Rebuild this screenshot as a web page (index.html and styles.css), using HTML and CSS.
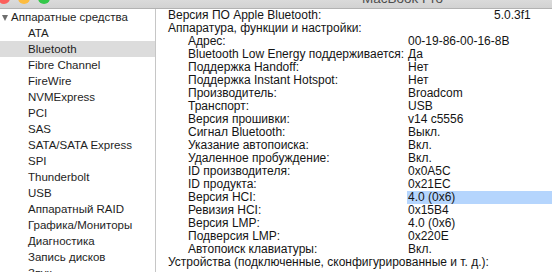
FILE: index.html
```html
<!DOCTYPE html>
<html lang="ru">
<head>
<meta charset="utf-8">
<title>MacBook Pro</title>
<link rel="stylesheet" href="styles.css">
</head>
<body>
<div class="window">
  <div class="titlebar">
    <span class="light red"></span>
    <span class="light yellow"></span>
    <span class="light green"></span>
    <span class="title">MacBook Pro</span>
  </div>
  <div class="content">
    <nav class="sidebar">
      <div class="srow group"><span class="tri"></span>Аппаратные средства</div>
      <div class="srow item">ATA</div>
      <div class="srow item selected">Bluetooth</div>
      <div class="srow item">Fibre Channel</div>
      <div class="srow item">FireWire</div>
      <div class="srow item">NVMExpress</div>
      <div class="srow item">PCI</div>
      <div class="srow item">SAS</div>
      <div class="srow item">SATA/SATA Express</div>
      <div class="srow item">SPI</div>
      <div class="srow item">Thunderbolt</div>
      <div class="srow item">USB</div>
      <div class="srow item">Аппаратный RAID</div>
      <div class="srow item">Графика/Мониторы</div>
      <div class="srow item">Диагностика</div>
      <div class="srow item">Запись дисков</div>
      <div class="srow item">Звук</div>
    </nav>
    <main class="details">
      <div class="row top"><span class="key">Версия ПО Apple Bluetooth:</span><span class="val">5.0.3f1</span></div>
      <div class="row"><span class="key wide">Аппаратура, функции и настройки:</span></div>
      <div class="row sub"><span class="key">Адрес:</span><span class="val">00-19-86-00-16-8B</span></div>
      <div class="row sub"><span class="key">Bluetooth Low Energy поддерживается:</span><span class="val">Да</span></div>
      <div class="row sub"><span class="key">Поддержка Handoff:</span><span class="val">Нет</span></div>
      <div class="row sub"><span class="key">Поддержка Instant Hotspot:</span><span class="val">Нет</span></div>
      <div class="row sub"><span class="key">Производитель:</span><span class="val">Broadcom</span></div>
      <div class="row sub"><span class="key">Транспорт:</span><span class="val">USB</span></div>
      <div class="row sub"><span class="key">Версия прошивки:</span><span class="val">v14 c5556</span></div>
      <div class="row sub"><span class="key">Сигнал Bluetooth:</span><span class="val">Выкл.</span></div>
      <div class="row sub"><span class="key">Указание автопоиска:</span><span class="val">Вкл.</span></div>
      <div class="row sub"><span class="key">Удаленное пробуждение:</span><span class="val">Вкл.</span></div>
      <div class="row sub"><span class="key">ID производителя:</span><span class="val">0x0A5C</span></div>
      <div class="row sub"><span class="key">ID продукта:</span><span class="val">0x21EC</span></div>
      <div class="row sub"><span class="key">Версия HCI:</span><span class="val hl">4.0 (0x6)</span></div>
      <div class="row sub"><span class="key">Ревизия HCI:</span><span class="val">0x15B4</span></div>
      <div class="row sub"><span class="key">Версия LMP:</span><span class="val">4.0 (0x6)</span></div>
      <div class="row sub"><span class="key">Подверсия LMP:</span><span class="val">0x220E</span></div>
      <div class="row sub"><span class="key">Автопоиск клавиатуры:</span><span class="val">Вкл.</span></div>
      <div class="row"><span class="key wide">Устройства (подключенные, сконфигурированные и т. д.):</span></div>
    </main>
  </div>
</div>
</body>
</html>
```

FILE: styles.css
```css
html, body {
  margin: 0;
  padding: 0;
  background: #ffffff;
}
body {
  width: 552px;
  height: 272px;
  overflow: hidden;
  font-family: "Liberation Sans", Arial, sans-serif;
  color: #1a1a1a;
}
.window {
  display: flex;
  flex-direction: column;
  height: 272px;
}
.titlebar {
  height: 8px;
  flex: none;
  display: flex;
  align-items: flex-end;
  overflow: hidden;
  background: linear-gradient(#dadada, #d2d2d2);
  border-bottom: 1px solid #b2b2b2;
}
.light {
  flex: none;
  width: 12px;
  height: 12px;
  border-radius: 50%;
  margin-bottom: 4px;
  margin-right: 8px;
}
.red { background: #fc605c; margin-left: -2px; }
.yellow { background: #fdbc40; }
.green { background: #34c84a; }
.title {
  margin-left: 304px;
  margin-bottom: 3px;
  font-size: 13.5px;
  line-height: 13px;
  color: #4d4d4d;
  white-space: nowrap;
}
.content {
  flex: 1;
  display: flex;
  min-height: 0;
}
.sidebar {
  width: 155px;
  flex: none;
  border-right: 1px solid #c6c6c6;
  font-size: 11.5px;
  color: #1e1e1e;
  overflow: hidden;
}
.srow {
  height: 16px;
  line-height: 16px;
  white-space: nowrap;
}
.srow.group {
  display: flex;
  align-items: center;
  padding-left: 2px;
}
.tri {
  width: 0;
  height: 0;
  border-left: 3.5px solid transparent;
  border-right: 3.5px solid transparent;
  border-top: 6px solid #6e6e6e;
  margin-right: 3px;
  margin-top: 1px;
}
.srow.item {
  padding-left: 28px;
}
.srow.selected {
  background: #dcdcdc;
}
.details {
  flex: 1;
  padding-left: 12px;
  font-size: 12px;
  color: #141414;
  overflow: hidden;
}
.row {
  display: flex;
  height: 13px;
  line-height: 13px;
  white-space: nowrap;
}
.row.sub {
  padding-left: 20px;
}
.row.top .key {
  width: 325px;
}
.row.sub .key {
  width: 219px;
}
.key.wide {
  width: auto;
}
.val {
  flex: 1;
  padding-left: 1px;
}
.val.hl {
  background: #b5d5fd;
}
```
